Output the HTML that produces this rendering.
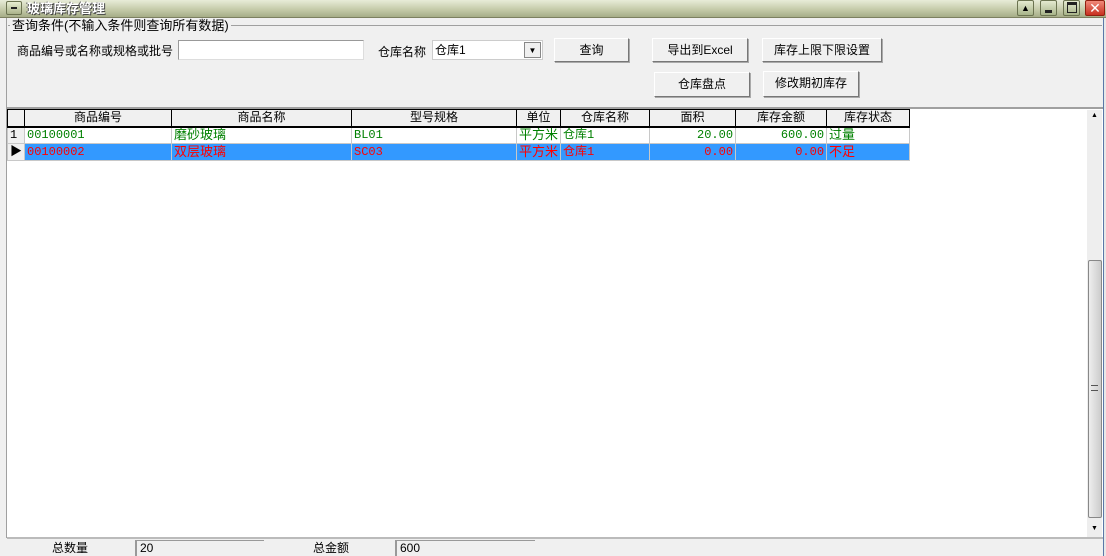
<!DOCTYPE html>
<html><head><meta charset="utf-8"><style>
*{margin:0;padding:0;box-sizing:border-box}
body{width:1106px;height:556px;overflow:hidden;background:#f0f0f0;position:relative;font-family:"Liberation Sans","Noto Sans CJK SC","WenQuanYi Zen Hei",sans-serif;font-size:12px;color:#000}
.a{position:absolute}
.title{left:0;top:0;width:1106px;height:18px;background:linear-gradient(#e8ecd8,#c2c8a6 60%,#a6ad88);border-bottom:1px solid #7c8060}
.ttxt{left:27px;top:0;font-size:13px;font-weight:bold;color:#fff;text-shadow:1px 1px 0 #444,-1px 0 0 #555;line-height:17px}
.tb{top:0;width:17px;height:16px;border:1px solid #6b7350;border-radius:2px;background:linear-gradient(#e4ead0,#a8b48a)}
.btn{background:#f0f0f0;border:1px solid;border-color:#fff #777 #777 #fff;box-shadow:1px 1px 0 #aaa;text-align:center;line-height:22px;font-size:12px}
.grid{left:7px;top:107px;width:1096px;height:430px;background:#fff;border-top:2px solid #a0a0a0}
table{border-collapse:collapse;position:absolute;left:7px;top:109px;font-size:12px;font-family:"Liberation Mono","Noto Sans CJK SC",monospace}
td{height:17px;border:1px solid #c8c8c8;padding:0 2px;white-space:nowrap;line-height:15px}
th{height:17px;border:1px solid #000;border-bottom:2px solid #000;font-weight:normal;background:#f0f0f0;font-family:"Liberation Sans","Noto Sans CJK SC",sans-serif;line-height:15px}
.g td{color:#008000}
.r td{color:#f00;background:#3399ff}
.rh{background:#f0f0f0!important;color:#000!important}
.n{text-align:right}
</style></head><body>
<div class="a title"></div>
<div class="a" style="left:6px;top:1px;width:16px;height:14px;border:1px solid #6b7350;border-radius:2px;background:linear-gradient(#e8eed2,#aab38a)"><div style="position:absolute;left:4px;top:5px;width:6px;height:2px;background:#222"></div></div>
<div class="a ttxt">玻璃库存管理</div>
<div class="a tb" style="left:1017px">&nbsp;</div>
<div class="a tb" style="left:1040px"></div>
<div class="a tb" style="left:1063px"></div>
<div class="a tb" style="left:1085px;width:20px;background:linear-gradient(#f08a7a,#c83020);border-color:#902010;color:#fff;font-size:14px;line-height:14px;text-align:center">✕</div>
<div class="a" style="left:1021px;top:3px;font-size:9px">▲</div>
<div class="a" style="left:1045px;top:10px;width:7px;height:3px;background:#222"></div>
<div class="a" style="left:1067px;top:2px;width:10px;height:11px;border:1px solid #222;border-top:3px solid #222"></div>
<div class="a" style="left:6px;top:18px;width:1px;height:520px;background:#a0a0a0"></div>
<div class="a" style="left:1103px;top:18px;width:3px;height:538px;background:#e8e8e8;border-left:1px solid #5a78a8"></div>
<div class="a" style="left:8px;top:25px;width:1094px;height:1px;background:#a0a0a0"></div>
<div class="a" style="left:10px;top:18px;background:#f0f0f0;padding:0 2px;font-size:13px;line-height:16px">查询条件(不输入条件则查询所有数据)</div>
<div class="a" style="left:17px;top:42px;font-size:12px">商品编号或名称或规格或批号</div>
<div class="a" style="left:178px;top:40px;width:186px;height:20px;background:#fff;border:1px solid #999;border-right-color:#ddd;border-bottom-color:#ddd"></div>
<div class="a" style="left:378px;top:43px;font-size:12px">仓库名称</div>
<div class="a" style="left:432px;top:40px;width:111px;height:20px;background:#fff;border:1px solid #ccc;font-size:12px;line-height:18px;padding-left:2px">仓库1</div>
<div class="a" style="left:524px;top:42px;width:17px;height:16px;background:#f0f0f0;border:1px solid #888;font-size:8px;text-align:center;line-height:15px">▼</div>
<div class="a btn" style="left:554px;top:38px;width:75px;height:24px">查询</div>
<div class="a btn" style="left:652px;top:38px;width:96px;height:24px">导出到Excel</div>
<div class="a btn" style="left:762px;top:38px;width:120px;height:24px">库存上限下限设置</div>
<div class="a btn" style="left:654px;top:72px;width:96px;height:25px">仓库盘点</div>
<div class="a btn" style="left:763px;top:71px;width:96px;height:26px">修改期初库存</div>
<div class="a grid"></div>
<table>
<tr><th style="width:17px"></th><th style="width:147px">商品编号</th><th style="width:180px">商品名称</th><th style="width:165px">型号规格</th><th style="width:44px">单位</th><th style="width:89px">仓库名称</th><th style="width:86px">面积</th><th style="width:91px">库存金额</th><th style="width:83px">库存状态</th></tr>
<tr class="g"><td class="rh">1</td><td>00100001</td><td style="font-size:13px">磨砂玻璃</td><td>BL01</td><td style="font-size:13px">平方米</td><td>仓库1</td><td class="n">20.00</td><td class="n">600.00</td><td style="font-size:13px">过量</td></tr>
<tr class="r"><td class="rh">▶</td><td>00100002</td><td style="font-size:13px">双层玻璃</td><td>SC03</td><td style="font-size:13px">平方米</td><td>仓库1</td><td class="n">0.00</td><td class="n">0.00</td><td style="font-size:13px">不足</td></tr>
</table>
<div class="a" style="left:1087px;top:110px;width:15px;height:427px;background:#eee"></div>
<div class="a" style="left:1091px;top:112px;font-size:7px">▲</div>
<div class="a" style="left:1091px;top:525px;font-size:7px">▼</div>
<div class="a" style="left:1088px;top:260px;width:14px;height:258px;border:1px solid #888;border-radius:2px;background:linear-gradient(90deg,#eee,#ccc)"></div>
<div class="a" style="left:1091px;top:385px;width:7px;height:6px;border-top:1px solid #555;border-bottom:1px solid #555"></div>
<div class="a" style="left:7px;top:537px;width:1096px;height:2px;background:#bbb"></div>
<div class="a" style="left:52px;top:540px;font-size:12px;line-height:16px">总数量</div>
<div class="a" style="left:135px;top:540px;width:129px;height:16px;border-left:2px solid #999;border-top:1px solid #999;font-size:12px;padding-left:3px;line-height:15px">20</div>
<div class="a" style="left:313px;top:540px;font-size:12px;line-height:16px">总金额</div>
<div class="a" style="left:395px;top:540px;width:140px;height:16px;border-left:2px solid #999;border-top:1px solid #999;font-size:12px;padding-left:3px;line-height:15px">600</div>
</body></html>
